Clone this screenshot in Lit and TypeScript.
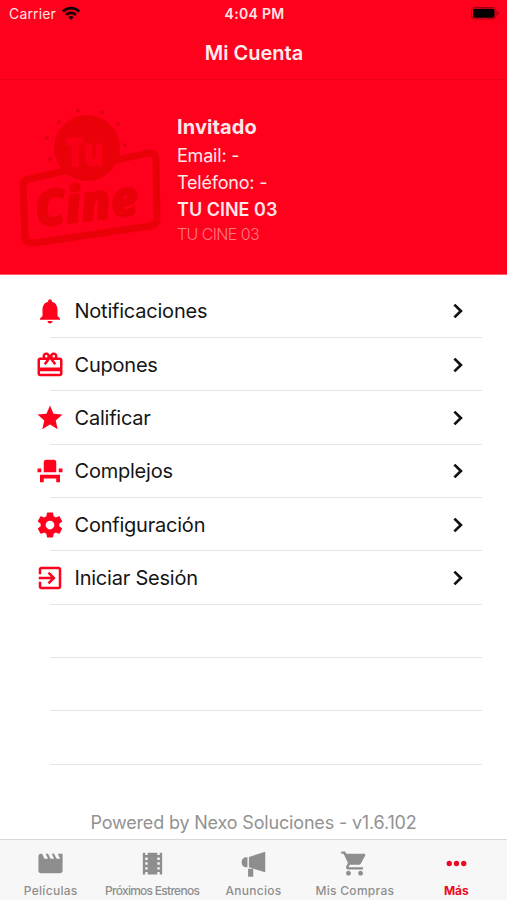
import { LitElement, html, css, svg } from "lit";
import { customElement } from "lit/decorators.js";

const wifi = svg`<path d="M1 9a15.6 15.6 0 0 1 22 0l-2.3 2.5a12.3 12.3 0 0 0-17.4 0zM5 13a10 10 0 0 1 14 0l-2.3 2.4a6.8 6.8 0 0 0-9.4 0zM8.8 17a4.6 4.6 0 0 1 6.4 0L12 20.3z"/>`;
const bell = svg`<path d="M12 22c1.1 0 2-.9 2-2h-4c0 1.1.89 2 2 2zm6-6v-5c0-3.07-1.64-5.64-4.5-6.32V4c0-.83-.67-1.5-1.5-1.5s-1.5.67-1.5 1.5v.68C7.63 5.36 6 7.92 6 11v5l-2 2v1h16v-1l-2-2z"/>`;
const gift = svg`<path d="M20 6h-2.18c.11-.31.18-.65.18-1 0-1.66-1.34-3-3-3-1.05 0-1.96.54-2.5 1.35l-.5.67-.5-.68C10.96 2.54 10.05 2 9 2 7.34 2 6 3.34 6 5c0 .35.07.69.18 1H4c-1.11 0-1.99.89-1.99 2L2 19c0 1.11.89 2 2 2h16c1.11 0 2-.89 2-2V8c0-1.11-.89-2-2-2zm-5-2c.55 0 1 .45 1 1s-.45 1-1 1-1-.45-1-1 .45-1 1-1zM9 4c.55 0 1 .45 1 1s-.45 1-1 1-1-.45-1-1 .45-1 1-1zm11 15H4v-2h16v2zm0-5H4V8h5.08L7 10.83 8.62 12 11 8.76l1-1.36 1 1.36L15.38 12 17 10.83 14.92 8H20v6z"/>`;
const star = svg`<path d="M12 17.27L18.18 21l-1.64-7.03L22 9.24l-7.19-.61L12 2 9.19 8.63 2 9.24l5.46 4.73L5.82 21z"/>`;
const seat = svg`<path d="M4 18v3h3v-3h10v3h3v-6H4zm15-8h3v3h-3zM2 10h3v3H2zm15 3H7V5c0-1.1.9-2 2-2h6c1.1 0 2 .9 2 2v8z"/>`;
const gear = svg`<path d="M19.43 12.98c.04-.32.07-.64.07-.98s-.03-.66-.07-.98l2.11-1.65c.19-.15.24-.42.12-.64l-2-3.46c-.12-.22-.39-.3-.61-.22l-2.49 1c-.52-.4-1.08-.73-1.69-.98l-.38-2.65C14.46 2.18 14.25 2 14 2h-4c-.25 0-.46.18-.49.42l-.38 2.65c-.61.25-1.17.59-1.69.98l-2.49-1c-.23-.09-.49 0-.61.22l-2 3.46c-.13.22-.07.49.12.64l2.11 1.65c-.04.32-.07.65-.07.98s.03.66.07.98l-2.11 1.65c-.19.15-.24.42-.12.64l2 3.46c.12.22.39.3.61.22l2.49-1c.52.4 1.08.73 1.69.98l.38 2.65c.03.24.24.42.49.42h4c.25 0 .46-.18.49-.42l.38-2.65c.61-.25 1.17-.59 1.69-.98l2.49 1c.23.09.49 0 .61-.22l2-3.46c.12-.22.07-.49-.12-.64l-2.11-1.65zM12 15.5c-1.93 0-3.5-1.57-3.5-3.5s1.57-3.5 3.5-3.5 3.5 1.57 3.5 3.5-1.57 3.5-3.5 3.5z"/>`;
const enter = svg`<path d="M10.09 15.59L11.5 17l5-5-5-5-1.41 1.41L12.67 11H3v2h9.67l-2.58 2.59zM19 3H5c-1.11 0-2 .9-2 2v4h2V5h14v14H5v-4H3v4c0 1.1.89 2 2 2h14c1.1 0 2-.9 2-2V5c0-1.1-.9-2-2-2z"/>`;
const clapper = svg`<path d="M18 4l2 4h-3l-2-4h-2l2 4h-3l-2-4H8l2 4H7L5 4H4c-1.1 0-1.99.9-1.99 2L2 18c0 1.1.9 2 2 2h16c1.1 0 2-.9 2-2V4h-4z"/>`;
const film = svg`<path d="M18 3v2h-2V3H8v2H6V3H4v18h2v-2h2v2h8v-2h2v2h2V3h-2zM8 17H6v-2h2v2zm0-4H6v-2h2v2zm0-4H6V7h2v2zm10 8h-2v-2h2v2zm0-4h-2v-2h2v2zm0-4h-2V7h2v2z"/>`;
const horn = svg`<path d="M21.700 2.200V19.200L8.200 15.200V6.600zM7 6.800v8.400H6C3.600 15.200 2.200 13.400 2.200 11S3.600 6.800 6 6.800zM7.500 16.300h4.300V23H7.500z"/>`;
const cart = svg`<path d="M7 18c-1.1 0-1.99.9-1.99 2S5.9 22 7 22s2-.9 2-2-.9-2-2-2zM1 2v2h2l3.6 7.59-1.35 2.45c-.16.28-.25.61-.25.96 0 1.1.9 2 2 2h12v-2H7.42c-.14 0-.25-.11-.25-.25l.03-.12.9-1.63h7.45c.75 0 1.41-.41 1.75-1.03l3.58-6.49c.08-.14.12-.31.12-.48 0-.55-.45-1-1-1H5.21l-.94-2H1zm16 16c-1.1 0-1.99.9-1.99 2s.89 2 1.99 2 2-.9 2-2-.9-2-2-2z"/>`;
const more = svg`<circle cx="6" cy="12" r="2.200"/><circle cx="12" cy="12" r="2.200"/><circle cx="18" cy="12" r="2.200"/>`;

const icon = (shape: unknown, cls: string) =>
  html`<svg class=${cls} viewBox="0 0 24 24" aria-hidden="true">${shape}</svg>`;

const rows = [
  { label: "Notificaciones", icon: bell },
  { label: "Cupones", icon: gift },
  { label: "Calificar", icon: star },
  { label: "Complejos", icon: seat },
  { label: "Configuración", icon: gear },
  { label: "Iniciar Sesión", icon: enter },
];

const tabs = [
  { label: "Películas", icon: clapper, cls: "" },
  { label: "Próximos Estrenos", icon: film, cls: "tight" },
  { label: "Anuncios", icon: horn, cls: "" },
  { label: "Mis Compras", icon: cart, cls: "" },
  { label: "Más", icon: more, cls: "active" },
];

@customElement("app-root")
export class AppRoot extends LitElement {
  static styles = css`
    :host {
      display: flex;
      flex-direction: column;
      width: 507px;
      height: 900px;
      overflow: hidden;
      background: #fff;
      font-family: Inter, "Liberation Sans", sans-serif;
      color: #151515;
    }
    * { box-sizing: border-box; }
    svg { display: block; fill: currentColor; flex: none; overflow: visible; }
    .status {
      display: grid;
      grid-template-columns: 1fr auto 1fr;
      align-items: center;
      height: 27px;
      padding: 0 7px 0 9px;
      background: #ff001d;
      color: #ffe3e5;
      font-size: 14px;
    }
    .carrier { display: flex; align-items: center; gap: 5px; letter-spacing: 0.15px; }
    .wifi { width: 20px; height: 20px; margin-top: -2px; color: #160003; }
    .time { font-weight: 600; font-size: 14px; letter-spacing: 0.3px; }
    .battery { justify-self: end; width: 29px; height: 13px; color: #000; }
    .title {
      display: flex;
      align-items: center;
      justify-content: center;
      height: 53px;
      padding-left: 1px;
      background: #ff001d;
      border-bottom: 1px solid #ec001a;
      color: #ffeced;
      font-size: 20px;
      font-weight: 600;
    }
    .profile {
      display: flex;
      height: 195px;
      background: #ff001d;
      border-bottom: 1px solid #ff5a69;
      color: #ffe6e8;
    }
    .logo { width: 177px; height: 194px; fill: none; }
    .logo text { font-family: "Open Sans", sans-serif; font-weight: 800; }
    .logo .cine { font-style: italic; }
    .info { display: flex; flex-direction: column; padding-top: 33px; font-size: 18px; line-height: 27px; }
    .name { font-size: 20px; font-weight: 700; line-height: 28.5px; letter-spacing: 0.1px; }
    .contact { letter-spacing: -0.2px; }
    .cinema { font-weight: 600; }
    .cinema-sub { font-size: 16px; font-weight: 300; line-height: 23.5px; letter-spacing: -0.6px; color: #ff7984; }
    .list { display: flex; flex-direction: column; height: 564px; padding-top: 9.5px; }
    .row { display: flex; align-items: center; height: 53.35px; padding: 0 35px; flex: none; }
    .item { width: 30px; height: 30px; color: #ff001d; }
    .label { flex: 1; padding-left: 9.5px; font-size: 20px; letter-spacing: -0.22px; }
    .chevron { width: 28px; height: 28px; color: #111; }
    .line { height: 1px; margin: -1px 25px 0 50px; background: #e6e6e6; flex: none; }
    .blank { height: 53.35px; flex: none; }
    .powered { margin: 0; padding-top: 46px; text-align: center; font-size: 18px; line-height: 24px; letter-spacing: -0.17px; color: #929292; }
    .tabs {
      display: grid;
      grid-template-columns: repeat(5, minmax(0, 1fr));
      height: 61px;
      border-top: 1px solid #d9d9d9;
      background: #f7f7f7;
      color: #8e8e8e;
    }
    .tab { display: flex; flex-direction: column; align-items: center; padding-top: 9px; font-size: 12px; font-weight: 500; letter-spacing: 0.3px; white-space: nowrap; }
    .tab svg { width: 29px; height: 29px; }
    .tab span { margin-top: 5px; line-height: 16px; }
    .tight { letter-spacing: -0.73px; }
    .active { color: #ed0823; font-weight: 700; letter-spacing: -0.1px; }
  `;

  render() {
    return html`
      <header class="status">
        <div class="carrier">Carrier ${icon(wifi, "wifi")}</div>
        <div class="time">4:04 PM</div>
        <svg class="battery" viewBox="0 0 29 13"><rect x=".5" y=".5" width="24.500" height="11.500" rx="3" fill="none" stroke="#9c0012"/><rect x="2" y="1.800" width="21.500" height="9" rx="1.800"/><path d="M26.500 4.500q3 1.800 0 3.600z" fill="#8c0010"/></svg>
      </header>
      <div class="title"><span>Mi Cuenta</span></div>
      <section class="profile">
        <svg class="logo" viewBox="0 0 177 194">
          <path d="M29 99L148 73q7-1 8 6l1 60q0 6-7 7L34 163q-8 1-9-6l-2-52q0-5 6-6z" stroke="#e90008" stroke-width="7"/>
          <circle cx="87" cy="68" r="33" fill="#e90008"/>
          <g fill="#e2000f"><circle cx="47" cy="58" r="2"/><circle cx="59" cy="42" r="2"/><circle cx="78" cy="31" r="1.800"/><circle cx="102" cy="32" r="2"/><circle cx="118" cy="44" r="2"/><circle cx="125" cy="65" r="2"/><circle cx="50" cy="79" r="2"/></g>
          <text transform="translate(66 86)" font-size="38" textLength="38" lengthAdjust="spacingAndGlyphs" fill="#fa0018" stroke="#fa0018">Tu</text>
          <text class="cine" transform="translate(37 147) rotate(-7)" font-size="50" textLength="104" lengthAdjust="spacingAndGlyphs" fill="#e90008" stroke="#e90008" stroke-width="1.500">Cine</text>
        </svg>
        <div class="info">
          <div class="name">Invitado</div>
          <div class="contact">Email: -</div>
          <div class="contact">Teléfono: -</div>
          <div class="cinema">TU CINE 03</div>
          <div class="cinema-sub">TU CINE 03</div>
        </div>
      </section>
      <main class="list">
        ${rows.map((r) => html`
          <div class="row">
            ${icon(r.icon, "item")}
            <span class="label">${r.label}</span>
            <svg class="chevron" viewBox="0 0 24 24"><path d="M8.900 6.500L14.500 12l-5.600 5.500" fill="none" stroke="currentColor" stroke-width="2.300"/></svg>
          </div>
          <div class="line"></div>`)}
        ${[0, 1, 2].map(() => html`<div class="blank"></div><div class="line"></div>`)}
        <p class="powered">Powered by Nexo Soluciones - v1.6.102</p>
      </main>
      <nav class="tabs">
        ${tabs.map((t) => html`<div class="tab ${t.cls}">${icon(t.icon, "glyph")}<span>${t.label}</span></div>`)}
      </nav>
    `;
  }
}
